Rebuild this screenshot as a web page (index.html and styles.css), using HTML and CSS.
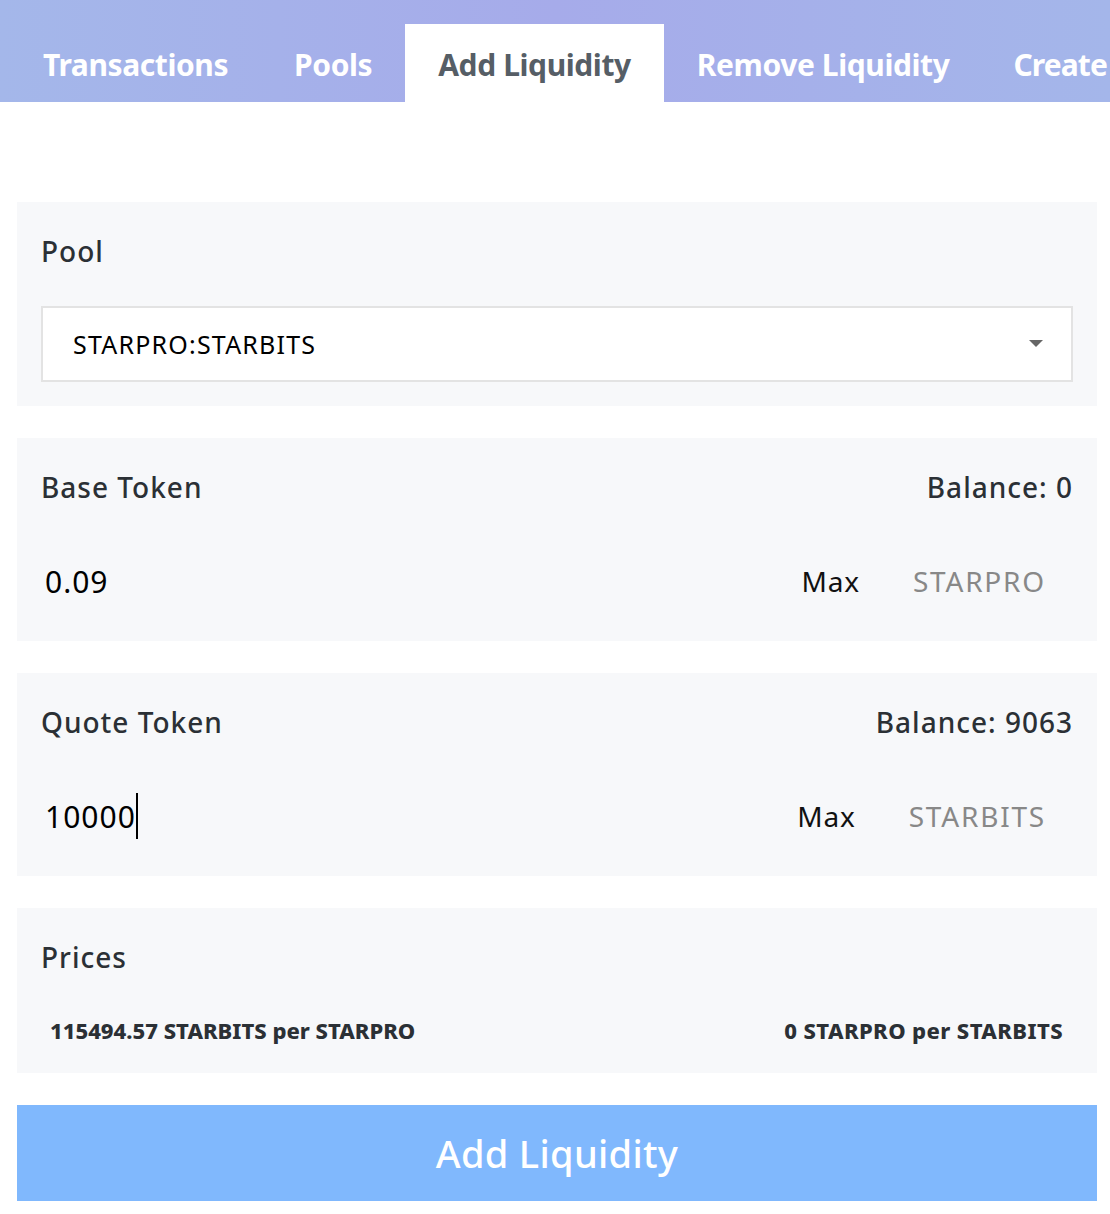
FILE: index.html
```html
<!DOCTYPE html>
<html>
<head>
<meta charset="utf-8">
<link rel="stylesheet" href="styles.css">
</head>
<body>
<nav class="tabs">
  <div class="tab">Transactions</div>
  <div class="tab">Pools</div>
  <div class="tab active">Add Liquidity</div>
  <div class="tab">Remove Liquidity</div>
  <div class="tab">Create</div>
</nav>
<main class="content">
  <section class="card">
    <div class="label">Pool</div>
    <div class="select">
      <span>STARPRO:STARBITS</span>
      <svg class="caret" width="14" height="8" viewBox="0 0 14 8"><path d="M0 0 H14 L7 7 Z" fill="#666"/></svg>
    </div>
  </section>
  <section class="card">
    <div class="row">
      <div class="label">Base Token</div>
      <div class="label">Balance: 0</div>
    </div>
    <div class="input-row">
      <span class="value">0.09</span>
      <span class="max">Max</span>
      <span class="sym">STARPRO</span>
    </div>
  </section>
  <section class="card">
    <div class="row">
      <div class="label">Quote Token</div>
      <div class="label">Balance: 9063</div>
    </div>
    <div class="input-row">
      <span class="value">10000<span class="cursor"></span></span>
      <span class="max">Max</span>
      <span class="sym">STARBITS</span>
    </div>
  </section>
  <section class="card prices">
    <div class="label">Prices</div>
    <div class="price-row">
      <span>115494.57 STARBITS per STARPRO</span>
      <span>0 STARPRO per STARBITS</span>
    </div>
  </section>
  <button class="submit">Add Liquidity</button>
</main>
</body>
</html>
```
FILE: styles.css
```css
* { box-sizing: border-box; }
html, body { margin: 0; padding: 0; background: #fff; }
body {
  font-family: "Noto Sans", "Open Sans", sans-serif;
  color: #2b3035;
  width: 1110px;
  overflow: hidden;
}
.tabs {
  display: flex;
  height: 102px;
  padding: 24px 0 0 10px;
  background: linear-gradient(90deg, #a4b7ea 0%, #a6abea 50%, #a4b6ea 100%);
  white-space: nowrap;
}
.tab {
  padding: 2px 33px 0;
  font-size: 30px;
  font-weight: 700;
  color: #fff;
  line-height: 78px;
  height: 78px;
  letter-spacing: -0.4px;
}
.tab:last-child {
  padding-left: 31px;
  letter-spacing: -0.9px;
}
.tab.active {
  background: #fff;
  color: #565e66;
}
.content {
  padding: 100px 13px 0 17px;
  display: flex;
  flex-direction: column;
  gap: 32px;
}
.card {
  background: #f7f8fa;
  padding: 24px 24px 22px;
}
.label {
  font-size: 28px;
  font-weight: 500;
  line-height: 50px;
  color: #2b3035;
  letter-spacing: 1px;
}
.select {
  margin-top: 30px;
  height: 76px;
  border: 2px solid #e3e3e3;
  background: #fff;
  display: flex;
  align-items: center;
  justify-content: space-between;
  padding: 0 28px 0 30px;
  font-size: 25px;
  letter-spacing: 1.2px;
  color: #000;
}
.card:first-child { padding-bottom: 24px; }
.row {
  display: flex;
  justify-content: space-between;
}
.input-row {
  display: flex;
  align-items: center;
  height: 76px;
  margin-top: 31px;
  padding: 0 27px 0 4px;
  font-size: 30px;
}
.value {
  flex: 1;
  color: #000;
  display: flex;
  align-items: center;
  letter-spacing: 1px;
}
.cursor {
  display: inline-block;
  width: 2px;
  height: 46px;
  background: #000;
  margin-left: 0;
}
.max {
  color: #111;
  font-size: 28px;
  letter-spacing: 0.8px;
  margin-right: 53px;
}
.sym {
  color: #888;
  font-size: 28px;
  letter-spacing: 1.8px;
}
.prices { padding-bottom: 23px; }
.price-row {
  display: flex;
  justify-content: space-between;
  padding: 28px 10px 0 9px;
  font-size: 22px;
  font-weight: 800;
  line-height: 40px;
  color: #2b3035;
  letter-spacing: 0;
}
.price-row span:last-child { letter-spacing: 0.4px; }
.submit {
  display: block;
  width: 100%;
  height: 96px;
  border: none;
  background: #80b8fd;
  color: #fff;
  font-family: "Noto Sans", "Open Sans", sans-serif;
  font-size: 38px;
  font-weight: 500;
  letter-spacing: 0.3px;
}
```
